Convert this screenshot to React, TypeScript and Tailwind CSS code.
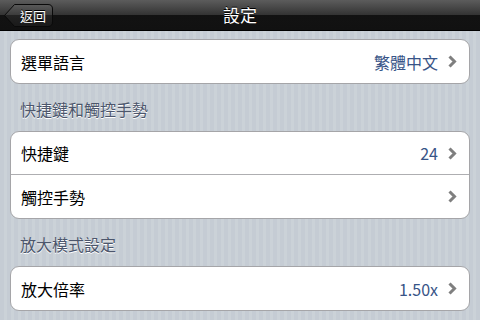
import { ReactNode } from 'react'

const font = { fontFamily: '"Noto Sans CJK TC", "Noto Sans", sans-serif' }

function Chevron() {
  return (
    <svg width="9" height="13" viewBox="0 0 9 13" className="ml-[10px] shrink-0">
      <path d="M1.5 1.5 L6.5 6.5 L1.5 11.5" fill="none" stroke="#7f7f7f" strokeWidth="3" />
    </svg>
  )
}

function Row({ label, value, last }: { label: string; value?: string; last?: boolean }) {
  return (
    <div
      className={`flex h-[43px] items-center pl-[10px] pr-[12px] ${last ? '' : 'border-b border-[#aeaeb1]'}`}
    >
      <span className="flex-1 text-[16px] text-black">{label}</span>
      {value && <span className="text-[16px] text-[#385487]">{value}</span>}
      <Chevron />
    </div>
  )
}

function Group({ children }: { children: ReactNode }) {
  return (
    <div className="mx-[10px] overflow-hidden rounded-[9px] border border-[#a5a5a8] bg-white">
      {children}
    </div>
  )
}

function Header({ text }: { text: string }) {
  return (
    <div className="px-[20px] text-[16px] text-[#4c566c] [text-shadow:0_1px_0_#ffffff]">{text}</div>
  )
}

export default function App() {
  return (
    <div
      style={font}
      className="h-[320px] w-[480px] overflow-hidden bg-[repeating-linear-gradient(90deg,#c5ccd4_0px,#c5ccd4_4px,#cbd2d8_4px,#cbd2d8_7px)]"
    >
      <div className="relative flex h-[31px] items-center justify-center border-b border-[#000] bg-[linear-gradient(#5c5c5c,#333333_50%,#121212_50%,#111111)]">
        <div className="absolute left-[4px] top-[4px] flex h-[23px] w-[49px] items-center">
          <svg width="49" height="23" viewBox="0 0 49 23" className="absolute left-0 top-0">
            <defs>
              <linearGradient id="bb" x1="0" y1="0" x2="0" y2="1">
                <stop offset="0" stopColor="#5a5a5a" />
                <stop offset="0.5" stopColor="#3a3a3a" />
                <stop offset="0.5" stopColor="#222222" />
                <stop offset="1" stopColor="#1a1a1a" />
              </linearGradient>
            </defs>
            <path
              d="M0.5 11.5 L10.5 0.5 H44 Q48.5 0.5 48.5 5 V18 Q48.5 22.5 44 22.5 H10.5 Z"
              fill="url(#bb)"
              stroke="#0a0a0a"
            />
          </svg>
          <span className="relative w-full pl-[9px] text-center text-[13px] text-white [text-shadow:0_-1px_0_#000]">
            返回
          </span>
        </div>
        <span className="text-[17px] text-white [text-shadow:0_-1px_0_#000]">設定</span>
      </div>

      <div className="pt-[8px]">
        <Group>
          <Row label="選單語言" value="繁體中文" last />
        </Group>
      </div>

      <div className="pt-[13px] pb-[10px]">
        <Header text="快捷鍵和觸控手勢" />
      </div>
      <Group>
        <Row label="快捷鍵" value="24" />
        <Row label="觸控手勢" last />
      </Group>

      <div className="pt-[13px] pb-[10px]">
        <Header text="放大模式設定" />
      </div>
      <Group>
        <Row label="放大倍率" value="1.50x" last />
      </Group>
    </div>
  )
}
